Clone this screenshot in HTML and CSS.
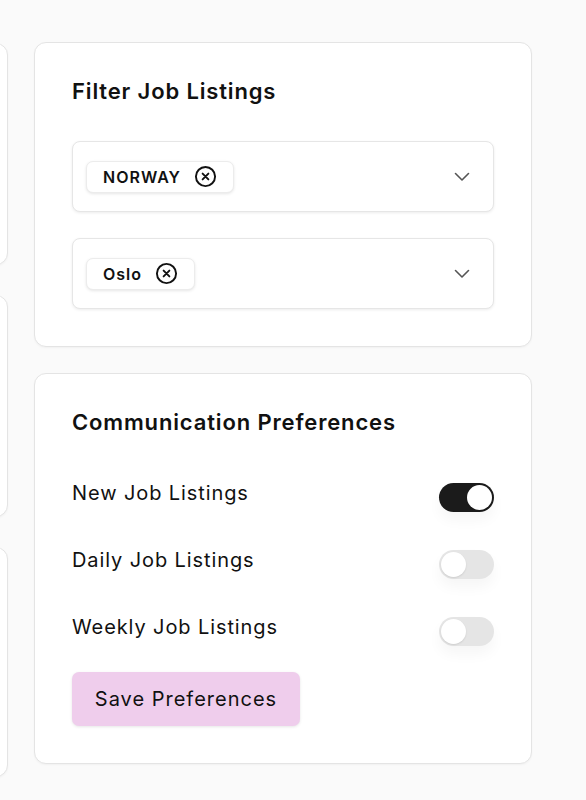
FILE: index.html
```html
<!DOCTYPE html>
<html lang="en">
<head>
<meta charset="utf-8">
<title>Job Preferences</title>
<link rel="stylesheet" href="styles.css">
</head>
<body>
<div class="page">
  <div class="left-col">
    <div class="card side-card side-1"></div>
    <div class="card side-card side-2"></div>
    <div class="card side-card side-3"></div>
  </div>
  <div class="right-col">
    <section class="card panel filter-panel">
      <h2 class="panel-title">Filter Job Listings</h2>
      <div class="select">
        <span class="chip"><span class="chip-label">NORWAY</span>
          <svg class="chip-x" viewBox="0 0 24 24" width="23" height="23"><circle cx="12" cy="12" r="10" fill="none" stroke="#111" stroke-width="2"/><path d="M9 9l6 6M15 9l-6 6" stroke="#111" stroke-width="2" stroke-linecap="round"/></svg>
        </span>
        <svg class="chevron" viewBox="0 0 16 10" width="16" height="10"><path d="M1.5 1.5L8 8l6.5-6.5" fill="none" stroke="#555" stroke-width="1.6" stroke-linecap="round" stroke-linejoin="round"/></svg>
      </div>
      <div class="select">
        <span class="chip"><span class="chip-label">Oslo</span>
          <svg class="chip-x" viewBox="0 0 24 24" width="23" height="23"><circle cx="12" cy="12" r="10" fill="none" stroke="#111" stroke-width="2"/><path d="M9 9l6 6M15 9l-6 6" stroke="#111" stroke-width="2" stroke-linecap="round"/></svg>
        </span>
        <svg class="chevron" viewBox="0 0 16 10" width="16" height="10"><path d="M1.5 1.5L8 8l6.5-6.5" fill="none" stroke="#555" stroke-width="1.6" stroke-linecap="round" stroke-linejoin="round"/></svg>
      </div>
    </section>
    <section class="card panel comm-panel">
      <h2 class="panel-title">Communication Preferences</h2>
      <div class="pref-row">
        <span class="pref-label">New Job Listings</span>
        <span class="switch on"><span class="knob"></span></span>
      </div>
      <div class="pref-row">
        <span class="pref-label">Daily Job Listings</span>
        <span class="switch"><span class="knob"></span></span>
      </div>
      <div class="pref-row">
        <span class="pref-label">Weekly Job Listings</span>
        <span class="switch"><span class="knob"></span></span>
      </div>
      <button class="save-btn" type="button">Save Preferences</button>
    </section>
  </div>
</div>
</body>
</html>
```

FILE: styles.css
```css
* { box-sizing: border-box; }
html, body { margin: 0; padding: 0; }
body {
  background: #fafafa;
  font-family: "Inter", "Open Sans", sans-serif;
  color: #111;
  width: 586px;
  height: 800px;
  overflow: hidden;
}
.page {
  display: flex;
  gap: 26px;
  padding-top: 42px;
}
.left-col {
  flex: 0 0 400px;
  margin-left: -392px;
  display: flex;
  flex-direction: column;
  gap: 30px;
  padding-top: 1px;
}
.right-col {
  flex: 0 0 498px;
  display: flex;
  flex-direction: column;
  gap: 26px;
}
.card {
  background: #fff;
  border: 1px solid #e4e4e4;
  border-radius: 12px;
  box-shadow: 0 1px 2px rgba(0,0,0,0.04);
}
.side-1 { height: 222px; }
.side-2 { height: 222px; }
.side-3 { height: 230px; }
.panel {
  padding: 33px 37px 37px;
}
.panel-title {
  margin: 0;
  font-size: 22px;
  line-height: 30px;
  font-weight: 600;
  letter-spacing: 0.85px;
}
.filter-panel .panel-title { margin-bottom: 35px; }
.select {
  display: flex;
  align-items: center;
  justify-content: space-between;
  height: 71px;
  padding: 0 23px 0 13px;
  border: 1px solid #e6e6e6;
  border-radius: 8px;
  box-shadow: 0 1px 3px rgba(0,0,0,0.08);
  background: #fff;
}
.select + .select { margin-top: 26px; }
.chip {
  display: flex;
  align-items: center;
  gap: 13px;
  height: 32px;
  padding: 0 16px 0 16px;
  border: 1px solid #ececec;
  border-radius: 7px;
  box-shadow: 0 1px 3px rgba(0,0,0,0.1);
  background: #fff;
}
.chip-label {
  font-size: 16px;
  font-weight: 600;
  letter-spacing: 1px;
}
.chip-x { display: block; }
.chevron { display: block; }
.comm-panel { padding-top: 33px; padding-bottom: 37px; }
.comm-panel .panel-title { margin-bottom: 22px; }
.pref-row {
  display: flex;
  align-items: center;
  justify-content: space-between;
  height: 67px;
}
.pref-label {
  font-size: 20px;
  letter-spacing: 0.9px;
}
.switch {
  display: flex;
  width: 55px;
  height: 29px;
  padding: 2px;
  border-radius: 15px;
  background: #e5e5e5;
  box-shadow: 0 8px 14px rgba(0,0,0,0.04);
  margin-top: 10px;
}
.switch.on {
  background: #1b1b1b;
  justify-content: flex-end;
}
.knob {
  width: 25px;
  height: 25px;
  border-radius: 50%;
  background: #fff;
  box-shadow: 0 1px 2px rgba(0,0,0,0.1);
}
.save-btn {
  margin-top: 12px;
  height: 54px;
  width: 228px;
  border: none;
  border-radius: 7px;
  background: #efcdec;
  box-shadow: 0 1px 3px rgba(0,0,0,0.1);
  font-family: "Inter", "Open Sans", sans-serif;
  font-size: 20px;
  color: #111;
  letter-spacing: 1px;
}
```
